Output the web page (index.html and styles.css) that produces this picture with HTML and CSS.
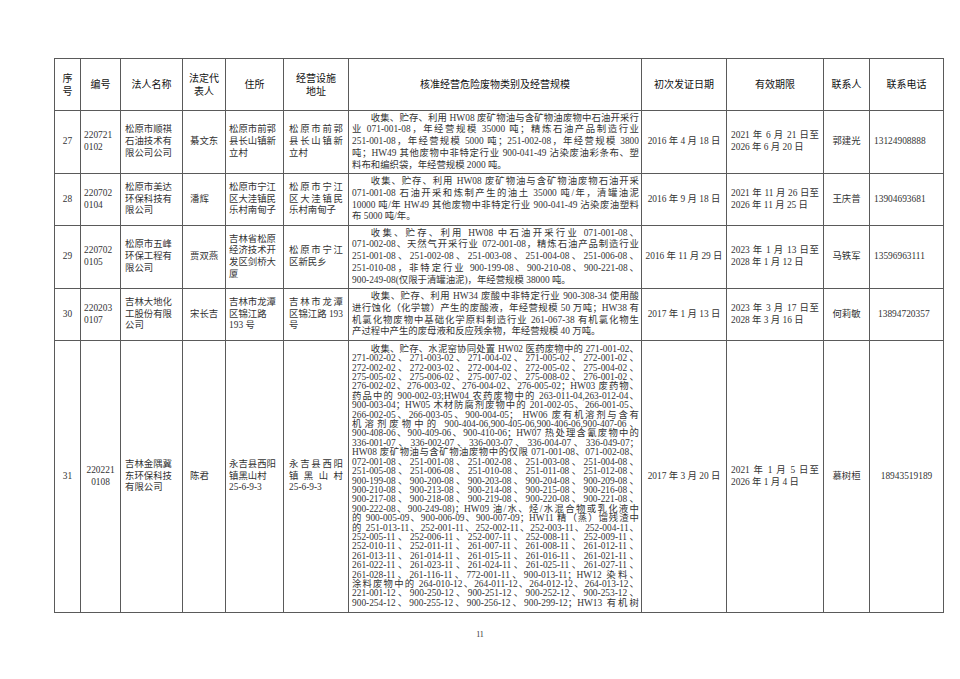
FILE: index.html
```html
<!DOCTYPE html>
<html lang="zh-CN">
<head>
<meta charset="utf-8">
<title>危险废物经营许可证</title>
<link rel="stylesheet" href="styles.css">
</head>
<body>
<div class="page">
<table class="tbl">
<colgroup>
<col class="c-no"><col class="c-code"><col class="c-name"><col class="c-rep"><col class="c-addr"><col class="c-site"><col class="c-scope"><col class="c-first"><col class="c-valid"><col class="c-person"><col class="c-phone">
</colgroup>
<thead>
<tr class="hd">
<th>序<br>号</th><th>编号</th><th>法人名称</th><th>法定代<br>表人</th><th>住所</th><th>经营设施<br>地址</th><th>核准经营危险废物类别及经营规模</th><th>初次发证日期</th><th>有效期限</th><th>联系人</th><th>联系电话</th>
</tr>
</thead>
<tbody>
<tr class="r5">
<td class="num">27</td>
<td class="code">220721<br>0102</td>
<td class="name">松原市顺祺石油技术有限公司公司</td>
<td class="rep">綦文东</td>
<td class="addr">松原市前郭县长山镇新立村</td>
<td class="site">松原市前郭县长山镇新立村</td>
<td class="scope">
<span class="ln first">收集、贮存、利用 HW08 废矿物油与含矿物油废物中石油开采行</span>
<span class="ln">业 071-001-08，年经营规模 35000 吨；精炼石油产品制造行业</span>
<span class="ln">251-001-08，年经营规模 5000 吨；251-002-08，年经营规模 3800</span>
<span class="ln">吨；HW49 其他废物中非特定行业 900-041-49 沾染废油彩条布、塑</span>
<span class="ln end">料布和编织袋，年经营规模 2000 吨。</span>
</td>
<td class="first">2016 年 4 月 18 日</td>
<td class="valid"><span class="ln">2021 年 6 月 21 日至</span><span class="ln end">2026 年 6 月 20 日</span></td>
<td class="person">郭建光</td>
<td class="phone">13124908888</td>
</tr>
<tr class="r4">
<td class="num">28</td>
<td class="code">220702<br>0104</td>
<td class="name">松原市美达环保科技有限公司</td>
<td class="rep">潘辉</td>
<td class="addr">松原市宁江区大洼镇民乐村南甸子</td>
<td class="site">松原市宁江区大洼镇民乐村南甸子</td>
<td class="scope">
<span class="ln first">收集、贮存、利用 HW08 废矿物油与含矿物油废物石油开采</span>
<span class="ln">071-001-08 石油开采和炼制产生的油土 35000 吨/年，清罐油泥</span>
<span class="ln">10000 吨/年 HW49 其他废物中非特定行业 900-041-49 沾染废油塑料</span>
<span class="ln end">布 5000 吨/年。</span>
</td>
<td class="first">2016 年 9 月 18 日</td>
<td class="valid"><span class="ln">2021 年 11 月 26 日至</span><span class="ln end">2026 年 11 月 25 日</span></td>
<td class="person">王庆普</td>
<td class="phone">13904693681</td>
</tr>
<tr class="r5">
<td class="num">29</td>
<td class="code">220702<br>0105</td>
<td class="name">松原市五峰环保工程有限公司</td>
<td class="rep">贾双燕</td>
<td class="addr">吉林省松原经济技术开发区剑桥大厦</td>
<td class="site">松原市宁江区新民乡</td>
<td class="scope">
<span class="ln first">收集、贮存、利用 HW08 中石油开采行业 071-001-08、</span>
<span class="ln">071-002-08、天然气开采行业 072-001-08，精炼石油产品制造行业</span>
<span class="ln">251-001-08、251-002-08、251-003-08、251-004-08、251-006-08、</span>
<span class="ln">251-010-08，非特定行业 900-199-08、900-210-08、900-221-08、</span>
<span class="ln end">900-249-08(仅限于清罐油泥)，年经营规模 38000 吨。</span>
</td>
<td class="first">2016 年 11 月 29 日</td>
<td class="valid"><span class="ln">2023 年 1 月 13 日至</span><span class="ln end">2028 年 1 月 12 日</span></td>
<td class="person">马铁军</td>
<td class="phone">13596963111</td>
</tr>
<tr class="r4">
<td class="num">30</td>
<td class="code">220203<br>0107</td>
<td class="name">吉林大地化工股份有限公司</td>
<td class="rep">宋长吉</td>
<td class="addr">吉林市龙潭区锦江路 193 号</td>
<td class="site">吉林市龙潭区锦江路 193 号</td>
<td class="scope">
<span class="ln first">收集、贮存、利用 HW34 废酸中非特定行业 900-308-34 使用酸</span>
<span class="ln">进行蚀化（化学镀）产生的废酸液，年经营规模 50 万吨；HW38 有</span>
<span class="ln">机氯化物废物中基础化学原料制造行业 261-067-38 有机氯化物生</span>
<span class="ln end">产过程中产生的废母液和反应残余物，年经营规模 40 万吨。</span>
</td>
<td class="first">2017 年 1 月 13 日</td>
<td class="valid"><span class="ln">2023 年 3 月 17 日至</span><span class="ln end">2028 年 3 月 16 日</span></td>
<td class="person">何莉敏</td>
<td class="phone shift">13894720357</td>
</tr>
<tr class="r-long">
<td class="num">31</td>
<td class="code center">220221<br>0108</td>
<td class="name">吉林金隅冀东环保科技有限公司</td>
<td class="rep">陈君</td>
<td class="addr">永吉县西阳镇黑山村<span class="nw">25-6-9-3</span></td>
<td class="site">永吉县西阳镇黑山村<span class="nw">25-6-9-3</span></td>
<td class="scope dense">
<span class="ln first">收集、贮存、水泥窑协同处置 HW02 医药废物中的 271-001-02、</span>
<span class="ln">271-002-02、271-003-02、271-004-02、271-005-02、272-001-02、</span>
<span class="ln">272-002-02、272-003-02、272-004-02、272-005-02、275-004-02、</span>
<span class="ln">275-005-02、275-006-02、275-007-02、275-008-02、276-001-02、</span>
<span class="ln">276-002-02、276-003-02、276-004-02、276-005-02；HW03 废药物、</span>
<span class="ln">药品中的 900-002-03;HW04 农药废物中的 263-011-04,263-012-04、</span>
<span class="ln">900-003-04；HW05 木材防腐剂废物中的 201-002-05、266-001-05、</span>
<span class="ln">266-002-05、266-003-05、900-004-05； HW06 废有机溶剂与含有</span>
<span class="ln">机溶剂废物中的 900-404-06,900-405-06,900-406-06,900-407-06、</span>
<span class="ln">900-408-06、900-409-06、900-410-06；HW07 热处理含氰废物中的</span>
<span class="ln">336-001-07、336-002-07、336-003-07、336-004-07、336-049-07；</span>
<span class="ln">HW08 废矿物油与含矿物油废物中的仅限 071-001-08、071-002-08、</span>
<span class="ln">072-001-08、251-001-08、251-002-08、251-003-08、251-004-08、</span>
<span class="ln">251-005-08、251-006-08、251-010-08、251-011-08、251-012-08、</span>
<span class="ln">900-199-08、900-200-08、900-203-08、900-204-08、900-209-08、</span>
<span class="ln">900-210-08、900-213-08、900-214-08、900-215-08、900-216-08、</span>
<span class="ln">900-217-08、900-218-08、900-219-08、900-220-08、900-221-08、</span>
<span class="ln">900-222-08、900-249-08)；HW09 油/水、烃/水混合物或乳化液中</span>
<span class="ln">的 900-005-09、900-006-09、900-007-09；HW11 精（蒸）馏残渣中</span>
<span class="ln">的 251-013-11、252-001-11、252-002-11、252-003-11、252-004-11、</span>
<span class="ln">252-005-11、252-006-11、252-007-11、252-008-11、252-009-11、</span>
<span class="ln">252-010-11、252-011-11、261-007-11、261-008-11、261-012-11、</span>
<span class="ln">261-013-11、261-014-11、261-015-11、261-016-11、261-021-11、</span>
<span class="ln">261-022-11、261-023-11、261-024-11、261-025-11、261-027-11、</span>
<span class="ln">261-028-11、261-116-11、772-001-11、900-013-11；HW12 染料、</span>
<span class="ln">涂料废物中的 264-010-12、264-011-12、264-012-12、264-013-12、</span>
<span class="ln">221-001-12、900-250-12、900-251-12、900-252-12、900-253-12、</span>
<span class="ln">900-254-12、900-255-12、900-256-12、900-299-12；HW13 有机树</span>
</td>
<td class="first">2017 年 3 月 20 日</td>
<td class="valid"><span class="ln">2021 年 1 月 5 日至</span><span class="ln end">2026 年 1 月 4 日</span></td>
<td class="person">慕树桓</td>
<td class="phone center">18943519189</td>
</tr>
</tbody>
</table>
<div class="pageno">11</div>
</div>
</body>
</html>
```

FILE: styles.css
```css
* { box-sizing: border-box; }
html, body { margin: 0; padding: 0; background: #fff; }
body {
  font-family: "Liberation Serif", "Noto Sans CJK SC", serif;
  color: #333;
}
.page {
  width: 960px;
  height: 679px;
  padding-top: 58px;
  overflow: hidden;
}
.tbl {
  margin-left: 54px;
  border-collapse: collapse;
  table-layout: fixed;
  width: 889px;
  font-size: 9.4px;
  line-height: 11.7px;
}
.c-no { width: 26px; }
.c-code { width: 40px; }
.c-name { width: 62px; }
.c-rep { width: 43px; }
.c-addr { width: 58px; }
.c-site { width: 65px; }
.c-scope { width: 293px; }
.c-first { width: 85px; }
.c-valid { width: 97px; }
.c-person { width: 46px; }
.c-phone { width: 74px; }

.tbl th, .tbl td {
  border: 1px solid #5a5a5a;
  padding: 0;
  vertical-align: middle;
}
.tbl th {
  font-weight: normal;
  font-size: 10px;
  line-height: 13px;
  color: #111;
  text-align: center;
}
.hd { height: 52px; }
.r5 { height: 63px; }
.r4 { height: 52px; }
.r-long { height: 272px; }

.num { text-align: center; }
.tbl .code { padding: 0 3px; text-align: left; }
.tbl .code.center { text-align: center; }
.tbl .name { padding: 0 5px 0 4px; }
.tbl .rep { padding: 0 4px 0 7px; }
.tbl .addr { padding: 0 5px 0 3px; }
.tbl .site { padding: 0 5px; text-align: justify; }
.tbl .scope { padding: 1px 2px 1px 3px; }
.tbl .scope.dense { line-height: 9.4px; }
.first { text-align: center; }
.tbl .valid { padding: 0 4px 0 4px; }
.tbl .valid .ln { white-space: nowrap; }
.person { text-align: center; }
.tbl .phone { padding-left: 4px; }
.tbl .phone.shift { padding-left: 8px; }
.tbl .phone.center { padding-left: 0; text-align: center; }

.nw { white-space: nowrap; }

.ln {
  display: block;
  text-align: justify;
  text-align-last: justify;
}
.ln.end { text-align-last: left; }
.ln.first { text-indent: 2em; }

.pageno {
  margin-top: 17px;
  text-align: center;
  font-size: 8px;
  line-height: 10px;
  color: #333;
}
```
